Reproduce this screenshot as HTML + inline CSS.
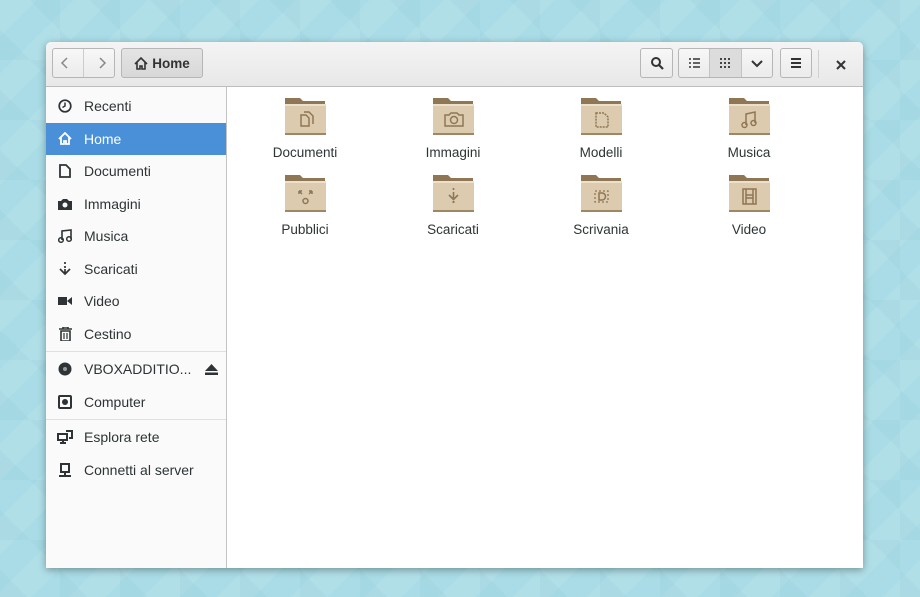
<!DOCTYPE html><html><head><style>
body{margin:0;width:920px;height:597px;overflow:hidden;font-family:"Liberation Sans","DejaVu Sans",sans-serif;
background:#a9dce6;
background-image:linear-gradient(135deg,rgba(255,255,255,.08) 25%,transparent 25%,transparent 50%,rgba(255,255,255,.08) 50%,rgba(255,255,255,.08) 75%,transparent 75%),linear-gradient(45deg,rgba(0,80,110,.03) 25%,transparent 25%,transparent 75%,rgba(0,80,110,.03) 75%);background-size:74px 74px,60px 60px;position:relative}
.win{position:absolute;left:46px;top:42px;width:817px;height:526px;background:#fff;border-radius:5px 5px 0 0;box-shadow:0 2px 8px rgba(0,0,0,.35);overflow:hidden}
.hb{height:44px;background:linear-gradient(#f4f4f4,#e8e8e8);border-bottom:1px solid #bdbdbd;position:relative}
.btn{position:absolute;top:6px;height:30px;border:1px solid #b6b6b6;background:linear-gradient(#f7f7f7,#ebebeb);border-radius:3px;box-sizing:border-box;display:flex;align-items:center;justify-content:center;color:#333;font-size:14px}
.side{position:absolute;left:0;top:45px;width:180px;bottom:0;background:#fafafa;border-right:1px solid #c3c3c3}
.it{height:32.5px;display:flex;align-items:center;font-size:14px;color:#2e3436}
.it .ic{width:38px;display:flex;justify-content:center;align-items:center}
.sel{background:#4a90d9;color:#fff}
.sep{border-top:1px solid #e0e0e0;margin:1px 0}
.f{position:absolute;width:148px;text-align:center;font-size:13.5px;color:#2e3436}
.f svg{display:block;margin:0 auto 8px}
</style></head><body>
<div class="win">
<div class="hb">
<div class="btn" style="left:6px;width:63px;justify-content:space-around;color:#888">
<svg width="10" height="14"><path d="M7 2L2 7l5 5" fill="none" stroke="#888" stroke-width="1.5"/></svg><span style="border-left:1px solid #ccc;height:28px"></span><svg width="10" height="14"><path d="M3 2l5 5-5 5" fill="none" stroke="#888" stroke-width="1.5"/></svg></div>
<div class="btn" style="left:75px;width:82px;background:linear-gradient(#e4e4e4,#d8d8d8);font-weight:bold;font-size:13.5px"><svg width="14" height="13" style="margin-right:4px"><path d="M1 7L7 1l6 6M3 5.5V12h3V9h2v3h3V5.5" fill="none" stroke="#333" stroke-width="1.6"/></svg>Home</div>
<div class="btn" style="left:594px;width:33px"><svg width="14" height="14"><circle cx="6" cy="6" r="4" fill="none" stroke="#333" stroke-width="2"/><path d="M9 9l4 4" stroke="#333" stroke-width="2.2"/></svg></div>
<div class="btn" style="left:632px;width:95px;padding:0">
<span style="width:31px;display:flex;justify-content:center"><svg width="11" height="10"><path d="M0 1h2M0 5h2M0 9h2M4 1h7M4 5h7M4 9h7" stroke="#333" stroke-width="1.6"/></svg></span><span style="width:31px;height:28px;background:#dcdcdc;border-left:1px solid #c3c3c3;border-right:1px solid #c3c3c3;display:flex;align-items:center;justify-content:center"><svg width="10" height="10" fill="#444"><rect x="0" y="0" width="2" height="2"/><rect x="4" y="0" width="2" height="2"/><rect x="8" y="0" width="2" height="2"/><rect x="0" y="4" width="2" height="2"/><rect x="4" y="4" width="2" height="2"/><rect x="8" y="4" width="2" height="2"/><rect x="0" y="8" width="2" height="2"/><rect x="4" y="8" width="2" height="2"/><rect x="8" y="8" width="2" height="2"/></svg></span><span style="width:31px;text-align:center"><svg width="12" height="8"><path d="M1 1l5 5 5-5" fill="none" stroke="#333" stroke-width="2"/></svg></span></div>
<div class="btn" style="left:734px;width:32px"><svg width="12" height="10"><path d="M1 1h10M1 5h10M1 9h10" stroke="#333" stroke-width="2"/></svg></div>
<div style="position:absolute;left:772px;top:8px;height:28px;border-left:1px solid #d0d0d0"></div>
<svg style="position:absolute;left:790px;top:18px" width="10" height="10"><path d="M1 1l8 8M9 1L1 9" stroke="#333" stroke-width="2"/></svg>
</div>
<div class="side">
<div style="height:3px"></div>
<div class="it"><span class="ic"><svg width="14" height="14"><circle cx="7" cy="7" r="5.8" fill="none" stroke="#2e3436" stroke-width="1.7"/><path d="M7 3.5V7l-2.5 1.5" fill="none" stroke="#2e3436" stroke-width="1.5"/></svg></span>Recenti</div>
<div class="it sel"><span class="ic"><svg width="14" height="13"><path d="M1 7L7 1l6 6M3 5.5V12h3V9h2v3h3V5.5" fill="none" stroke="#fff" stroke-width="1.8"/></svg></span>Home</div>
<div class="it"><span class="ic"><svg width="12" height="14"><path d="M1 1h6l4 4v8H1z" fill="none" stroke="#2e3436" stroke-width="1.8"/></svg></span>Documenti</div>
<div class="it"><span class="ic"><svg width="14" height="12"><path d="M0 3h3l2-2h4l2 2h3v9H0z" fill="#2e3436"/><circle cx="7" cy="7" r="2.5" fill="#fafafa"/></svg></span>Immagini</div>
<div class="it"><span class="ic"><svg width="14" height="14"><path d="M4 11V2l9-1v9" fill="none" stroke="#2e3436" stroke-width="1.6"/><circle cx="3" cy="11" r="2.3" fill="none" stroke="#2e3436" stroke-width="1.5"/><circle cx="11" cy="10" r="2.3" fill="none" stroke="#2e3436" stroke-width="1.5"/></svg></span>Musica</div>
<div class="it"><span class="ic"><svg width="14" height="14"><path d="M7 0v2M7 4v2M7 7v4M2 7l5 5 5-5" fill="none" stroke="#2e3436" stroke-width="1.7"/></svg></span>Scaricati</div>
<div class="it"><span class="ic"><svg width="14" height="10"><rect x="0" y="1" width="9" height="8" fill="#2e3436"/><path d="M9 5l5-4v8z" fill="#2e3436"/></svg></span>Video</div>
<div class="it"><span class="ic"><svg width="13" height="14"><path d="M0 2h13M4 2V0h5v2M2 4h9v10H2z" fill="none" stroke="#2e3436" stroke-width="1.6"/><path d="M5 6v6M8 6v6" stroke="#2e3436" stroke-width="1.2"/></svg></span>Cestino</div>
<div class="sep"></div>
<div class="it"><span class="ic"><svg width="14" height="14"><circle cx="7" cy="7" r="6.5" fill="#2e3436"/><circle cx="7" cy="7" r="2" fill="#999"/></svg></span>VBOXADDITIO...<span style="margin-left:14px;display:flex"><svg width="13" height="11"><path d="M6.5 0L13 7H0z" fill="#2e3436"/><rect y="8.5" width="13" height="2.5" fill="#2e3436"/></svg></span></div>
<div class="it"><span class="ic"><svg width="14" height="14"><rect x="1" y="1" width="12" height="12" rx="1" fill="none" stroke="#2e3436" stroke-width="2"/><circle cx="7" cy="7" r="3" fill="#2e3436"/></svg></span>Computer</div>
<div class="sep"></div>
<div class="it"><span class="ic"><svg width="16" height="14"><rect x="1" y="4" width="9" height="6" fill="none" stroke="#2e3436" stroke-width="2"/><path d="M3 13h6M6 10v3M9 1h6v7h-3" fill="none" stroke="#2e3436" stroke-width="2"/></svg></span>Esplora rete</div>
<div class="it"><span class="ic"><svg width="14" height="14"><rect x="3" y="1" width="8" height="8" fill="none" stroke="#2e3436" stroke-width="2"/><path d="M7 9v3M1 13h12" stroke="#2e3436" stroke-width="2"/></svg></span>Connetti al server</div>
</div>
<svg width="0" height="0" style="position:absolute"><defs><g id="fd"><path d="M1 1h15l3 3h22v33H1z" fill="#8f7654"/><rect x="1" y="7" width="41" height="31" rx="2" fill="#dccbaf"/><rect x="1" y="7" width="41" height="2" fill="#ece0cc"/><rect x="1" y="36" width="41" height="2" fill="#9e8765"/></g></defs></svg>
<div class="f" style="left:185px;top:55px"><svg width="43" height="40"><use href="#fd"/><path d="M17 18h5l3 3v8h-8zM20 15h5l4 4v8" fill="none" stroke="#8f7654" stroke-width="1.5"/></svg>Documenti</div>
<div class="f" style="left:333px;top:55px"><svg width="43" height="40"><use href="#fd"/><path d="M13 18h4l2-2h6l2 2h4v11H13z" fill="none" stroke="#8f7654" stroke-width="1.5"/><circle cx="22" cy="23" r="3.5" fill="none" stroke="#8f7654" stroke-width="1.5"/></svg>Immagini</div>
<div class="f" style="left:481px;top:55px"><svg width="43" height="40"><use href="#fd"/><path d="M16 16h8l4 4v10H16z" fill="none" stroke="#8f7654" stroke-width="1.5" stroke-dasharray="2 1"/></svg>Modelli</div>
<div class="f" style="left:629px;top:55px"><svg width="43" height="40"><use href="#fd"/><path d="M18 28V17l9-2v11" fill="none" stroke="#8f7654" stroke-width="1.5"/><circle cx="16.5" cy="28" r="2.5" fill="none" stroke="#8f7654" stroke-width="1.5"/><circle cx="25.5" cy="26" r="2.5" fill="none" stroke="#8f7654" stroke-width="1.5"/></svg>Musica</div>
<div class="f" style="left:185px;top:132px"><svg width="43" height="40"><use href="#fd"/><circle cx="21.5" cy="27" r="2.5" fill="none" stroke="#8f7654" stroke-width="1.5"/><path d="M15 17l3 3M15 17v3M15 17h3M28 17l-3 3M28 17v3M28 17h-3" fill="none" stroke="#8f7654" stroke-width="1.5"/></svg>Pubblici</div>
<div class="f" style="left:333px;top:132px"><svg width="43" height="40"><use href="#fd"/><path d="M21.5 14v2M21.5 18v6M17 21l4.5 4.5L26 21" fill="none" stroke="#8f7654" stroke-width="1.6"/><rect x="20.5" y="27" width="2" height="2" fill="#8f7654"/></svg>Scaricati</div>
<div class="f" style="left:481px;top:132px"><svg width="43" height="40"><use href="#fd"/><path d="M15 17h13v11H15z" fill="none" stroke="#8f7654" stroke-width="1.3" stroke-dasharray="2 2"/><path d="M19 19h3a3 3 0 010 7h-3z" fill="none" stroke="#8f7654" stroke-width="1.5"/></svg>Scrivania</div>
<div class="f" style="left:629px;top:132px"><svg width="43" height="40"><use href="#fd"/><path d="M15 15h13v15H15zM18 15v15M25 15v15M18 21h7M18 24h7" fill="none" stroke="#8f7654" stroke-width="1.5"/></svg>Video</div>
</div>
</body></html>
